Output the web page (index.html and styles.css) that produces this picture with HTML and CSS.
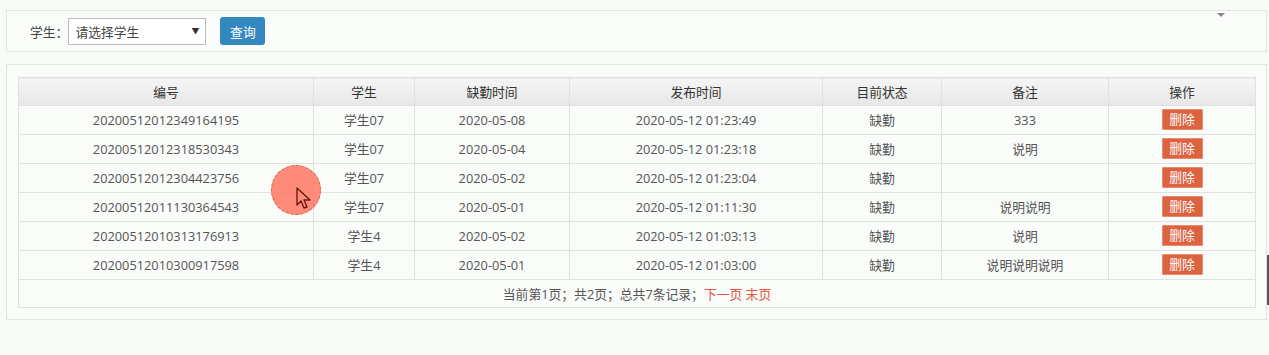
FILE: index.html
```html
<!DOCTYPE html>
<html lang="zh-CN">
<head>
<meta charset="utf-8">
<title>缺勤记录</title>
<link rel="stylesheet" href="styles.css">
</head>
<body>
<div class="search-panel">
  <label class="label">学生：</label>
  <div class="select"><span>请选择学生</span><span class="caret">▼</span></div>
  <button class="btn-query">查询</button>
  <span class="corner-caret"></span>
</div>
<div class="table-panel">
  <table class="grid">
    <colgroup>
      <col class="c1"><col class="c2"><col class="c3"><col class="c4"><col class="c5"><col class="c6"><col class="c7">
    </colgroup>
    <thead>
      <tr><th>编号</th><th>学生</th><th>缺勤时间</th><th>发布时间</th><th>目前状态</th><th>备注</th><th>操作</th></tr>
    </thead>
    <tbody>
      <tr><td>20200512012349164195</td><td>学生07</td><td>2020-05-08</td><td>2020-05-12 01:23:49</td><td>缺勤</td><td>333</td><td><button class="btn-del">删除</button></td></tr>
      <tr><td>20200512012318530343</td><td>学生07</td><td>2020-05-04</td><td>2020-05-12 01:23:18</td><td>缺勤</td><td>说明</td><td><button class="btn-del">删除</button></td></tr>
      <tr><td>20200512012304423756</td><td>学生07</td><td>2020-05-02</td><td>2020-05-12 01:23:04</td><td>缺勤</td><td></td><td><button class="btn-del">删除</button></td></tr>
      <tr><td>20200512011130364543</td><td>学生07</td><td>2020-05-01</td><td>2020-05-12 01:11:30</td><td>缺勤</td><td>说明说明</td><td><button class="btn-del">删除</button></td></tr>
      <tr><td>20200512010313176913</td><td>学生4</td><td>2020-05-02</td><td>2020-05-12 01:03:13</td><td>缺勤</td><td>说明</td><td><button class="btn-del">删除</button></td></tr>
      <tr><td>20200512010300917598</td><td>学生4</td><td>2020-05-01</td><td>2020-05-12 01:03:00</td><td>缺勤</td><td>说明说明说明</td><td><button class="btn-del">删除</button></td></tr>
    </tbody>
    <tfoot>
      <tr><td colspan="7">当前第1页；共2页；总共7条记录；<a class="pg">下一页</a> <a class="pg">末页</a></td></tr>
    </tfoot>
  </table>
</div>
<div class="cursor-mark">
  <svg width="18" height="24" viewBox="0 0 18 24"><path d="M2 2 L2 19 L6 15 L9 22 L12 21 L9 14 L15 14 Z" fill="none" stroke="#6b1a12" stroke-width="1.4" stroke-linejoin="round"/></svg>
</div>
<div class="scroll-edge"></div>
</body>
</html>
```
FILE: styles.css
```css
* { box-sizing: border-box; }
html, body { margin: 0; padding: 0; }
body {
  background: #f9fbf9;
  font-family: "Open Sans", "Noto Sans CJK SC", "Liberation Sans", sans-serif;
  font-size: 12.8px;
  color: #555;
  width: 1269px;
  height: 355px;
  overflow: hidden;
  position: relative;
}
.search-panel {
  margin: 10px 2px 0 6px;
  height: 42px;
  border: 1px solid #e2e4e2;
  background: #fafcfa;
  display: flex;
  align-items: center;
  padding-left: 23px;
  position: relative;
}
.label { color: #444; }
.select {
  width: 138px;
  height: 27px;
  border: 1px solid #b9bbb9;
  background: #fff;
  display: flex;
  align-items: center;
  justify-content: space-between;
  padding: 0 6px 0 6px;
  color: #444;
}
.select .caret { font-size: 8px; color: #333; margin-bottom: 2px; }
.btn-query {
  margin-left: 14px;
  width: 45px;
  height: 28px;
  border: none;
  border-radius: 3px;
  background: #3488c0;
  color: #fff;
  font-family: inherit;
  font-size: 12.8px;
  padding: 0;
}
.corner-caret {
  position: absolute;
  right: 41px;
  top: 2px;
  width: 0; height: 0;
  border-left: 4px solid transparent;
  border-right: 4px solid transparent;
  border-top: 4px solid #888;
}
.table-panel {
  margin: 12px 2px 0 6px;
  height: 256px;
  border: 1px solid #e2e4e2;
  background: #fafcfa;
  padding: 12px 11px 0 11px;
}
.grid {
  width: 1237px;
  table-layout: fixed;
  border-collapse: collapse;
  border: 1px solid #dcdedc;
  line-height: 16px;
}
.c1 { width: 295px; }
.c2 { width: 101px; }
.c3 { width: 155px; }
.c4 { width: 253px; }
.c5 { width: 119px; }
.c6 { width: 167px; }
.c7 { width: 147px; }
.grid th, .grid td {
  border: 1px solid #dfe1df;
  text-align: center;
  padding: 0;
  font-weight: normal;
}
.grid th {
  height: 28px;
  background: linear-gradient(#f4f5f4, #e6e7e6);
  color: #333;
}
.grid tbody td {
  height: 29px;
  background: #fafcfa;
  color: #555;
  padding-bottom: 1px;
}
.grid tfoot td {
  height: 28px;
  color: #555;
  background: #fafcfa;
}
.pg { color: #e0553f; }
.btn-del {
  width: 41px;
  height: 21px;
  border: none;
  border-radius: 2px;
  background: #dc6240;
  color: #fff;
  font-family: inherit;
  font-size: 12.8px;
  line-height: 21px;
  padding: 0;
  vertical-align: middle;
  box-shadow: 0 0 0 1px #e98b6c inset;
}
.cursor-mark {
  position: absolute;
  left: 271px;
  top: 165px;
  width: 50px;
  height: 50px;
  border-radius: 50%;
  background: rgba(255, 120, 100, 0.85);
  border: 1px dashed #d9503f;
}
.cursor-mark svg {
  position: absolute;
  left: 23px;
  top: 20px;
}
.scroll-edge {
  position: absolute;
  right: 0;
  top: 255px;
  width: 2px;
  height: 50px;
  background: #555;
}
```
